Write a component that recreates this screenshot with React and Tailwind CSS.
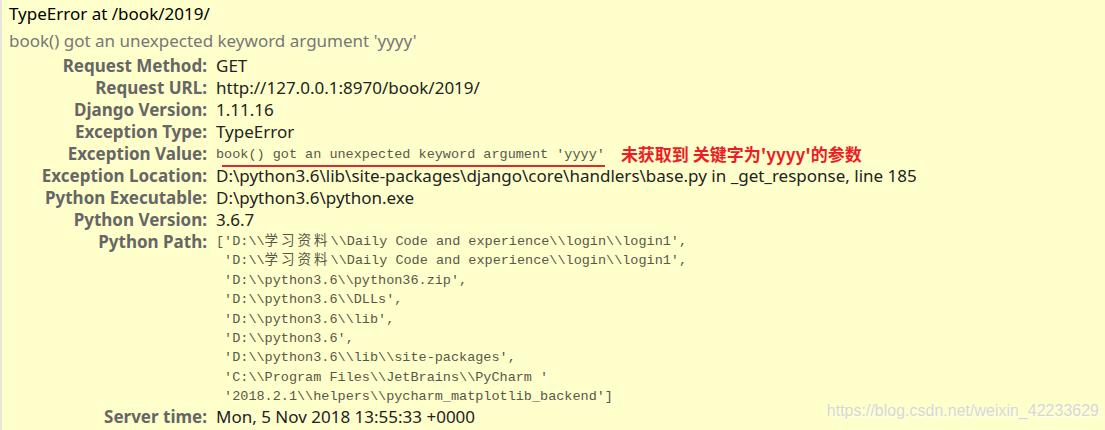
const rows = [
  ['Request Method:', 'GET'],
  ['Request URL:', 'http://127.0.0.1:8970/book/2019/'],
  ['Django Version:', '1.11.16'],
  ['Exception Type:', 'TypeError'],
];

const rows2 = [
  ['Exception Location:', 'D:\\python3.6\\lib\\site-packages\\django\\core\\handlers\\base.py in _get_response, line 185'],
  ['Python Executable:', 'D:\\python3.6\\python.exe'],
  ['Python Version:', '3.6.7'],
];

const paths = [
  "'D:\\\\python3.6\\\\python36.zip',",
  "'D:\\\\python3.6\\\\DLLs',",
  "'D:\\\\python3.6\\\\lib',",
  "'D:\\\\python3.6',",
  "'D:\\\\python3.6\\\\lib\\\\site-packages',",
  "'C:\\\\Program Files\\\\JetBrains\\\\PyCharm '",
  "'2018.2.1\\\\helpers\\\\pycharm_matplotlib_backend']",
];

const sans = "font-['Noto_Sans','Liberation_Sans',sans-serif]";
const mono = "font-['Liberation_Mono','Noto_Sans_CJK_SC',monospace]";

function Row({ label, children }) {
  return (
    <div className="flex h-[22px] items-center">
      <div className="w-[205px] shrink-0 text-right font-bold text-[#666666] leading-[22px]">{label}</div>
      <div className="pl-[9px] text-[#222222] leading-[22px] whitespace-nowrap">{children}</div>
    </div>
  );
}

export default function App() {
  return (
    <div className={`w-[1105px] h-[430px] bg-[#ffffcc] border-l-2 border-[#e6e6dc] relative overflow-hidden ${sans} text-[17px]`}>
      <div className="pl-[7px] pt-[3px]">
        <div className="leading-[22px] text-black">TypeError at /book/2019/</div>
        <div className="mt-[5px] leading-[22px] text-[#777777]">book() got an unexpected keyword argument 'yyyy'</div>
      </div>

      <div className="mt-[3px]">
        {rows.map(([l, v]) => (
          <Row key={l} label={l}>{v}</Row>
        ))}
        <Row label="Exception Value:">
          <span className="flex items-center">
            <span className={`relative ${mono} text-[13.5px] text-[#58584a] leading-[18px] mt-[2px]`}>
              book() got an unexpected keyword argument 'yyyy'
              <span className="absolute left-[6px] right-0 bottom-[-3px] h-[2px] bg-[#e8262a]" />
            </span>
            <span className="ml-[16px] font-['Noto_Sans_CJK_SC',sans-serif] font-bold text-[17px] leading-[22px] text-[#ee1c24]">
              未获取到 关键字为'yyyy'的参数
            </span>
          </span>
        </Row>
        {rows2.map(([l, v]) => (
          <Row key={l} label={l}>{v}</Row>
        ))}
        <div className="flex h-[175px]">
          <div className="w-[205px] shrink-0 text-right font-bold text-[#666666] leading-[22px]">Python Path:</div>
          <div className={`pl-[9px] pt-[1px] ${mono} text-[13.5px] leading-[19.4px] text-[#58584a] whitespace-pre`}>
            <div>['D:\\<span className="tracking-[3px]">学习资料</span>\\Daily Code and experience\\login\\login1',</div>
            <div> 'D:\\<span className="tracking-[3px]">学习资料</span>\\Daily Code and experience\\login\\login1',</div>
            {paths.map((p) => (
              <div key={p}> {p}</div>
            ))}
          </div>
        </div>
        <Row label="Server time:">Mon, 5 Nov 2018 13:55:33 +0000</Row>
      </div>

      <div className="absolute right-[6px] bottom-[9px] font-['Liberation_Sans',sans-serif] text-[16px] leading-[20px] text-[#d8d8c8] [text-shadow:1px_1px_0_#ffffff]">
        https://blog.csdn.net/weixin_42233629
      </div>
    </div>
  );
}
